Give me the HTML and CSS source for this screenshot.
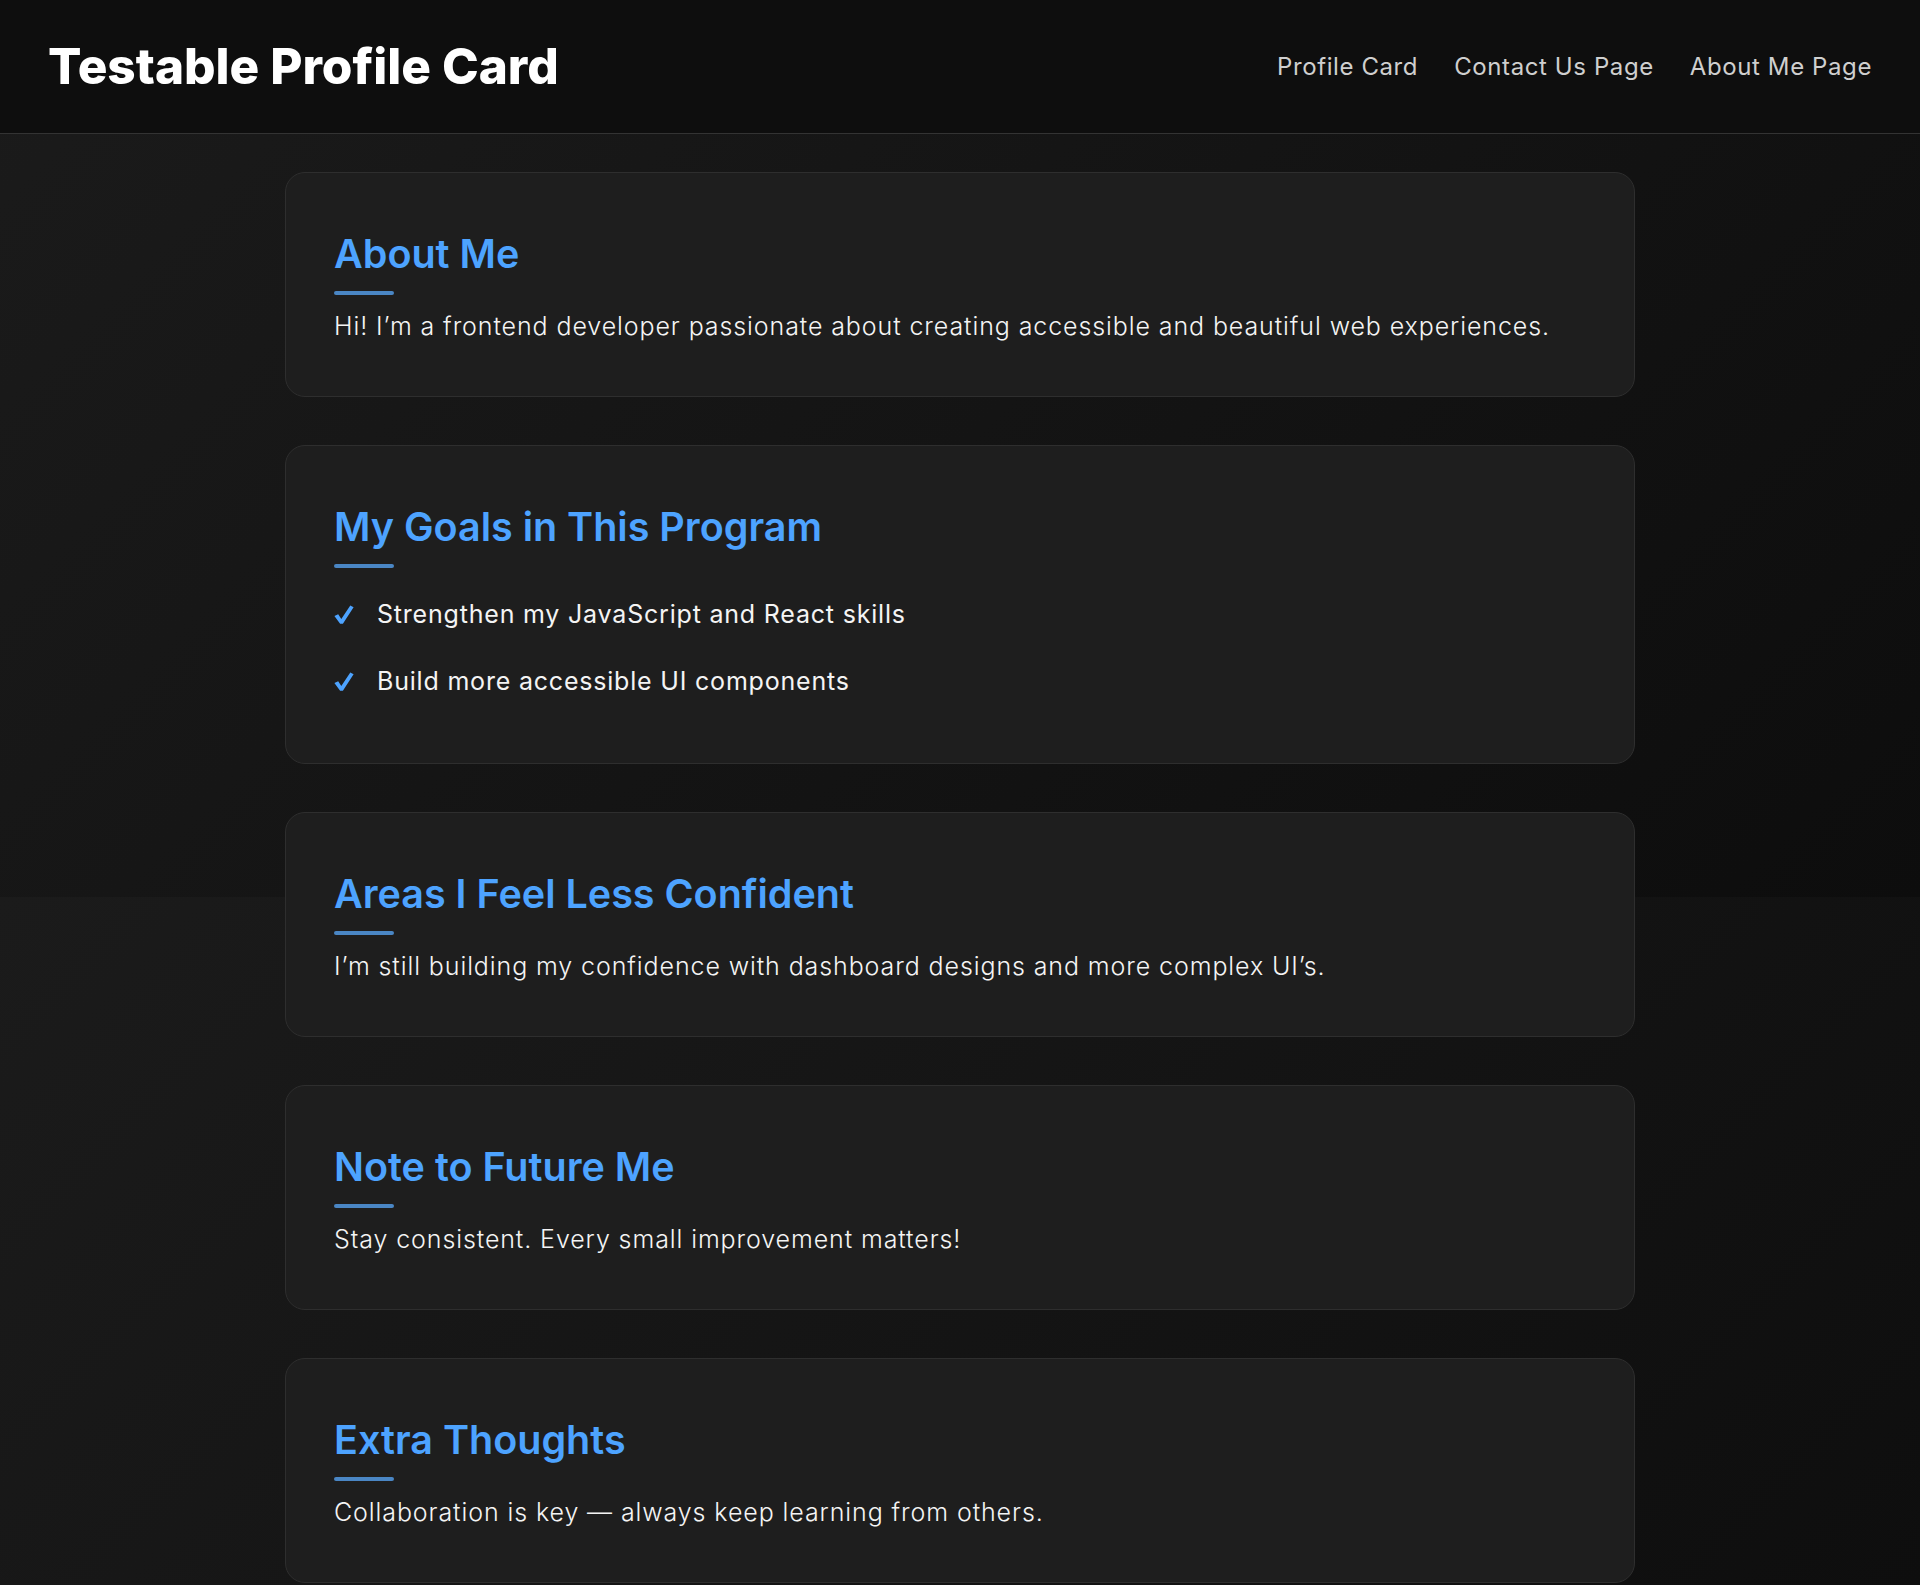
FILE: index.html
```html
<!DOCTYPE html>
<html lang="en">
<head>
<meta charset="utf-8">
<title>Testable Profile Card</title>
<link rel="stylesheet" href="styles.css">
</head>
<body>
<header class="site-header">
  <h1 class="site-title">Testable Profile Card</h1>
  <nav class="site-nav">
    <a class="nav-link" href="#">Profile Card</a>
    <a class="nav-link" href="#">Contact Us Page</a>
    <a class="nav-link" href="#">About Me Page</a>
  </nav>
</header>
<main class="content">
  <section class="card">
    <h2 class="card-title">About Me</h2>
    <div class="divider"></div>
    <p class="card-text">Hi! I’m a frontend developer passionate about creating accessible and beautiful web experiences.</p>
  </section>
  <section class="card">
    <h2 class="card-title">My Goals in This Program</h2>
    <div class="divider"></div>
    <ul class="goal-list">
      <li class="goal"><span class="check"><svg class="check-icon" viewBox="0 0 20 19" aria-hidden="true"><path d="M0.4 11.1 L4.2 9.3 L7.3 14.1 L16.3 0.4 L19.6 2.3 L8.9 18.8 L6.1 18.8 Z"/></svg></span><span>Strengthen my JavaScript and React skills</span></li>
      <li class="goal"><span class="check"><svg class="check-icon" viewBox="0 0 20 19" aria-hidden="true"><path d="M0.4 11.1 L4.2 9.3 L7.3 14.1 L16.3 0.4 L19.6 2.3 L8.9 18.8 L6.1 18.8 Z"/></svg></span><span>Build more accessible UI components</span></li>
    </ul>
  </section>
  <section class="card">
    <h2 class="card-title">Areas I Feel Less Confident</h2>
    <div class="divider"></div>
    <p class="card-text">I’m still building my confidence with dashboard designs and more complex UI’s.</p>
  </section>
  <section class="card">
    <h2 class="card-title">Note to Future Me</h2>
    <div class="divider"></div>
    <p class="card-text">Stay consistent. Every small improvement matters!</p>
  </section>
  <section class="card">
    <h2 class="card-title">Extra Thoughts</h2>
    <div class="divider"></div>
    <p class="card-text">Collaboration is key — always keep learning from others.</p>
  </section>
</main>
</body>
</html>
```

FILE: styles.css
```css
html {
  background-color: #131313;
  background-image: linear-gradient(135deg, #1b1b1b 0%, #0d0d0d 100%);
  background-size: 100% 897px;
  background-repeat: repeat-y;
}

body {
  margin: 0;
  font-family: Inter, "Noto Sans", sans-serif;
  color: #f4f4f4;
}

.site-header {
  height: 133px;
  box-sizing: content-box;
  display: flex;
  align-items: center;
  justify-content: space-between;
  padding: 0 48px;
  background: #0e0e0e;
  border-bottom: 1px solid #333333;
}

.site-title {
  margin: 0;
  font-size: 49.5px;
  font-weight: 800;
  color: #ffffff;
  line-height: 1.2;
}

.site-nav {
  display: flex;
  gap: 36px;
}

.nav-link {
  color: #cfcfcf;
  text-decoration: none;
  font-size: 24px;
  letter-spacing: 0.6px;
  font-weight: 400;
}

.content {
  max-width: 1350px;
  margin: 0 auto;
  padding: 38px 0 48px;
  display: flex;
  flex-direction: column;
  gap: 48px;
}

.card {
  background: #1e1e1e;
  border: 1px solid #2e2e2e;
  border-radius: 20px;
  padding: 57px 48px 50px;
}

.card-title {
  margin: 0;
  font-size: 39.5px;
  line-height: 48px;
  font-weight: 600;
  color: #4da3ff;
}

.divider {
  width: 60px;
  height: 4px;
  border-radius: 2px;
  background: #4a86c4;
  margin-top: 13px;
}

.card-text {
  margin: 11px 0 0;
  font-size: 25px;
  line-height: 40px;
  font-weight: 300;
  letter-spacing: 0.9px;
}

.goal-list {
  list-style: none;
  margin: 26px 0 12px;
  padding: 0;
  display: flex;
  flex-direction: column;
  gap: 27px;
}

.goal {
  display: flex;
  align-items: center;
  font-size: 25px;
  line-height: 40px;
  font-weight: 400;
  letter-spacing: 0.8px;
}

.check {
  width: 43px;
  flex: none;
  display: flex;
  align-items: center;
  padding-top: 1px;
}

.check-icon {
  width: 20px;
  height: 19px;
  fill: #4da3ff;
}
```
